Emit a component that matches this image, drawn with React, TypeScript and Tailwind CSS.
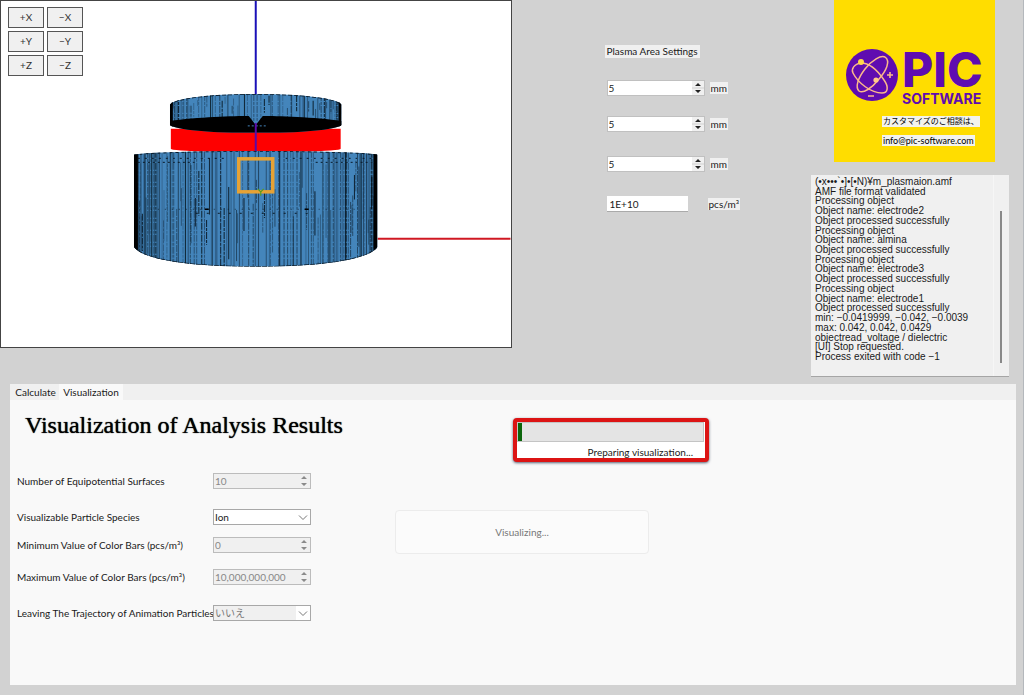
import { useState } from "react";

type Tab = "calculate" | "visualization";

const VIEW_BUTTONS = ["+X", "-X", "+Y", "-Y", "+Z", "-Z"];

const LOG_LINES = [
  "(•x•••`•]•[•N)¥m_plasmaion.amf",
  "AMF file format validated",
  "Processing object",
  "Object name: electrode2",
  "Object processed successfully",
  "Processing object",
  "Object name: almina",
  "Object processed successfully",
  "Processing object",
  "Object name: electrode3",
  "Object processed successfully",
  "Processing object",
  "Object name: electrode1",
  "Object processed successfully",
  "min: −0.0419999, −0.042, −0.0039",
  "max: 0.042, 0.042, 0.0429",
  "objectread_voltage / dielectric",
  "[UI] Stop requested.",
  "Process exited with code −1",
];

// Small deterministic generator so the mesh lines are the same on every render
function makeRandom(seed: number) {
  let s = seed;
  return () => {
    s = (s * 16807) % 2147483647;
    return s / 2147483647;
  };
}

interface MeshProps {
  cx: number;
  rx: number;
  top: number;
  bottom: number;
  count: number;
  seed: number;
}

// Vertical mesh edges of a cylinder, denser towards its sides
function Mesh({ cx, rx, top, bottom, count, seed }: MeshProps) {
  const rand = makeRandom(seed);
  const lines = [];
  for (let i = 0; i < count; i++) {
    const angle = ((i + rand()) / count - 0.5) * Math.PI;
    const x = cx + rx * Math.sin(angle);
    const h = bottom - top;
    const full = rand() > 0.4;
    const y1 = full ? top : top + rand() * h * 0.6;
    const y2 = full ? bottom : y1 + (0.2 + rand() * 0.5) * h;
    const strong = rand() > 0.82;
    lines.push(
      <line
        key={i}
        x1={x}
        x2={x}
        y1={y1}
        y2={y2}
        stroke="#06121c"
        strokeWidth={strong ? 1.1 : 0.8}
        strokeDasharray={rand() > 0.5 ? "7 1 3 1" : "none"}
        opacity={strong ? 0.8 : 0.3 + rand() * 0.4}
      />
    );
  }
  return <g>{lines}</g>;
}

function Model() {
  return (
    <svg viewBox="0 0 510 346" className="block w-full" role="img" aria-label="Electrode model">
      <defs>
        <clipPath id="base">
          <path d="M133 154 Q145 151 255 150 Q365 151 377 154 V246 C368 260 315 266 255 266 C195 266 142 260 133 246 Z" />
        </clipPath>
        <clipPath id="lid">
          <path d="M169 104 C173 97 212 93 255 93 C298 93 337 97 341 104 V124 C335 129 300 132 255 132 C210 132 175 129 169 124 Z" />
        </clipPath>
      </defs>
      <line x1="255" x2="255" y1="0" y2="94" stroke="#1a10b8" strokeWidth="2" />
      <line x1="377" x2="510" y1="238" y2="238" stroke="#d01822" strokeWidth="2" />
      <path d="M170 128 H340 V148 Q340 150 300 151 H210 Q170 150 170 148 Z" fill="#fe0000" />

      <g clipPath="url(#lid)">
        <rect x="169" y="92" width="172" height="42" fill="#4485bb" />
        <Mesh cx={255} rx={85} top={93} bottom={120} count={80} seed={77} />
        <path d="M169 120 C195 116 235 115 248 115 L255 124 L262 115 C275 115 315 116 341 120 V134 H169 Z" fill="#000" />
        <path d="M169 104 C173 97 212 93 255 93 C298 93 337 97 341 104" fill="none" stroke="#0a1a28" strokeWidth="1.6" strokeDasharray="4 2" />
        <rect x="169" y="98" width="3" height="30" fill="#000" />
        <rect x="338" y="98" width="3" height="30" fill="#000" />
        <path d="M247 125 H265" stroke="#4485bb" strokeDasharray="2 2" />
      </g>
      <line x1="255" x2="255" y1="122" y2="152" stroke="#5a0aa8" strokeWidth="2" />

      <g clipPath="url(#base)">
        <rect x="133" y="149" width="244" height="118" fill="#4485bb" />
        <Mesh cx={255} rx={121} top={150} bottom={267} count={160} seed={4211} />
        <path d="M133 154 Q145 151 255 150 Q365 151 377 154" fill="none" stroke="#0a1a28" strokeWidth="1.6" strokeDasharray="3 3" />
        <path d="M137 157.5 H225 M285 157.5 H373" stroke="#0a1a28" strokeDasharray="2 5" />
        <path d="M137 161.5 H195 M315 161.5 H373" stroke="#0a1a28" strokeDasharray="2 3" />
        <path d="M150 208.5 H360" stroke="#0a1a28" strokeDasharray="1 6" opacity="0.7" />
        <path d="M195 212.5 H315" stroke="#0a1a28" strokeDasharray="2 9" />
        <path d="M204 208.5 h4 M304 208.5 h4" stroke="#000" strokeWidth="1.6" />
        <rect x="133" y="152" width="4" height="100" fill="#000" />
        <rect x="373" y="152" width="4" height="100" fill="#000" />
        <path d="M133 246 C142 260 195 266 255 266 C315 266 368 260 377 246" fill="none" stroke="#06121c" strokeWidth="1.3" strokeDasharray="5 1" />
      </g>

      <rect x="238" y="158" width="34" height="33" fill="none" stroke="#e6a235" strokeWidth="3.5" />
      <path d="M257 188 l3 3 l3 -3 M260 191 v4" fill="none" stroke="#5c9a1c" strokeWidth="1.2" />
    </svg>
  );
}

function LogoMark() {
  return (
    <svg viewBox="0 0 52 52" className="size-[52px] shrink-0" aria-hidden="true">
      <circle cx="26" cy="26" r="26" fill="#5f0cb0" />
      <g fill="none" stroke="#fbb98a" strokeWidth="1.5">
        <path d="M15 14 C8 15 5 20 7 24 C12 34 25 44 36 44 C42 44 43 38 38 31 C32 22 24 14 15 14" />
        <path d="M39 8 C45 12 40 22 33 30 C26 39 17 45 13 42 C9 38 12 29 19 20 C26 11 35 6 39 8" />
      </g>
      <circle cx="15" cy="13" r="3" fill="#ffd84a" />
      <circle cx="30" cy="31" r="2.6" fill="#ffc98a" />
      <path d="M41 26 h6 M44 23 v6 M22 47 h6" stroke="#fbb98a" strokeWidth="1.6" />
    </svg>
  );
}

function SpinArrows({ muted }: { muted?: boolean }) {
  return (
    <svg viewBox="0 0 12 14" className="h-[14px] w-3 shrink-0 bg-[#f0f0f0]" aria-hidden="true">
      <path d="M6 2 L9 5 H3 Z M6 12 L3 9 H9 Z" fill={muted ? "#8a8a8a" : "#222"} />
      {!muted && <path d="M0 7 H12" stroke="#d0d0d0" />}
    </svg>
  );
}

interface SpinProps {
  id: string;
  value: string;
  disabled?: boolean;
  label?: string;
}

function SpinBox({ id, value, disabled, label }: SpinProps) {
  return (
    <div
      className={`flex h-4 w-[98px] items-center border ${
        disabled ? "border-[#bcbcbc] bg-[#f0f0f0]" : "border-[#c0c0c0] bg-white"
      }`}
    >
      <input
        id={id}
        aria-label={label}
        defaultValue={value}
        disabled={disabled}
        className="h-[14px] w-0 flex-1 bg-transparent px-px leading-[14px] outline-none disabled:text-[#888]"
      />
      <SpinArrows muted={disabled} />
    </div>
  );
}

interface SelectProps {
  id: string;
  options: string[];
  disabled?: boolean;
}

function SelectBox({ id, options, disabled }: SelectProps) {
  return (
    <div className="relative h-4 w-[98px] border border-[#a8a8a8] bg-white">
      <select
        id={id}
        disabled={disabled}
        className="block h-[14px] w-full appearance-none px-px leading-[14px] outline-none disabled:bg-[#f0f0f0] disabled:text-[#777] disabled:opacity-100"
      >
        {options.map((o) => (
          <option key={o}>{o}</option>
        ))}
      </select>
      <svg viewBox="0 0 14 14" className="pointer-events-none absolute top-0 right-0 size-[14px] bg-white" aria-hidden="true">
        <path d="M3 5.5 L7 9.5 L11 5.5" fill="none" stroke="#777" />
      </svg>
    </div>
  );
}

function PlasmaSettings() {
  return (
    <section className="flex flex-1 flex-col items-start pt-[45px] pl-[95px]">
      <h2 className="-ml-0.5 bg-[#f0f0f0] px-0.5 leading-[13px]">Plasma Area Settings</h2>
      <div className="mt-[22px] flex items-center gap-[5px]">
        <SpinBox id="area-x" value="5" label="Area X" />
        <span className="bg-[#f0f0f0] px-px leading-3">mm</span>
      </div>
      <div className="mt-5 flex items-center gap-[5px]">
        <SpinBox id="area-y" value="5" label="Area Y" />
        <span className="bg-[#f0f0f0] px-px leading-3">mm</span>
      </div>
      <div className="mt-6 flex items-center gap-[5px]">
        <SpinBox id="area-z" value="5" label="Area Z" />
        <span className="bg-[#f0f0f0] px-px leading-3">mm</span>
      </div>
      <div className="mt-6 flex items-center gap-5">
        <input
          aria-label="Plasma density"
          defaultValue="1E+10"
          className="h-4 w-[81px] border-b border-[#aaa] bg-white px-[3px] outline-none"
        />
        <span className="bg-[#f0f0f0] px-px leading-3">pcs/m³</span>
      </div>
    </section>
  );
}

function Brand() {
  return (
    <div className="mr-[14px] ml-[23px] flex h-[162px] flex-col bg-[#ffdd00] pt-[49px] pl-3">
      <div className="flex items-start gap-1 font-['Inter',sans-serif] text-[#5f0cb0]">
        <LogoMark />
        <div>
          <p className="text-[48px] leading-[41px] font-extrabold">PIC</p>
          <p className="text-[14px] leading-[18px] font-bold">SOFTWARE</p>
        </div>
      </div>
      <div className="mt-2 ml-9 flex flex-col items-start gap-2">
        <p className="bg-[#f3f3ee] px-px text-[8px] leading-[11px] text-black">カスタマイズのご相談は、</p>
        <a href="mailto:info@pic-software.com" className="bg-[#f3f3ee] px-px text-[9px] leading-[11px] text-black">
          info@pic-software.com
        </a>
      </div>
    </div>
  );
}

function LogPanel() {
  return (
    <div className="mt-[13px] flex h-[202px] justify-between border-b border-[#a5a5a5] bg-[#f0f0f0]">
      <div role="log" className="flex h-[186px] flex-col justify-between pt-0.5 pl-1 font-['Liberation_Sans',sans-serif] leading-[9px] whitespace-nowrap">
        {LOG_LINES.map((line, i) => (
          <p key={i}>{line}</p>
        ))}
      </div>
      <div className="w-4 shrink-0 border-l border-[#f6f6f6] pt-9 pl-[6px]">
        <div className="h-[152px] w-0.5 bg-[#888]" />
      </div>
    </div>
  );
}

function VisualizationTab() {
  return (
    <div className="grid grid-cols-[378px_1fr] pl-[7px]">
      <div>
        <h1 className="mt-[10px] ml-2 font-['Liberation_Serif',serif] text-[24px] leading-[30px] whitespace-nowrap text-black [text-shadow:0_0_1px_#000]">
          Visualization of Analysis Results
        </h1>
        <form className="mt-[33px]">
          <div className="flex h-4 items-center">
            <label htmlFor="surfaces" className="w-[196px] whitespace-nowrap">Number of Equipotential Surfaces</label>
            <SpinBox id="surfaces" value="10" disabled />
          </div>
          <div className="mt-5 flex h-4 items-center">
            <label htmlFor="species" className="w-[196px] whitespace-nowrap">Visualizable Particle Species</label>
            <SelectBox id="species" options={["Ion", "Electron"]} />
          </div>
          <div className="mt-3 flex h-4 items-center">
            <label htmlFor="min" className="w-[196px] whitespace-nowrap">Minimum Value of Color Bars (pcs/m³)</label>
            <SpinBox id="min" value="0" disabled />
          </div>
          <div className="mt-4 flex h-4 items-center">
            <label htmlFor="max" className="w-[196px] whitespace-nowrap">Maximum Value of Color Bars (pcs/m³)</label>
            <SpinBox id="max" value="10,000,000,000" disabled />
          </div>
          <div className="mt-5 flex h-4 items-center">
            <label htmlFor="trail" className="w-[196px] whitespace-nowrap">Leaving The Trajectory of Animation Particles</label>
            <SelectBox id="trail" options={["いいえ", "はい"]} disabled />
          </div>
        </form>
      </div>

      <div className="pt-[18px]">
        <div className="ml-[118px] h-11 w-[196px] rounded border-4 border-[#dc1414] bg-white shadow-sm shadow-gray-500">
          <div
            role="progressbar"
            aria-valuenow={2}
            aria-label="Visualization progress"
            className="mr-px h-5 border border-[#c4c4c4] bg-[#e4e4e4]"
          >
            <div className="h-full bg-[#0b650b]" style={{ width: "2%" }} />
          </div>
          <p className="mt-1 mr-3 text-right leading-3">Preparing visualization...</p>
        </div>
        <button
          disabled
          className="mt-12 block h-11 w-[254px] rounded-sm border border-[#ececec] bg-[#fbfbfb] text-[#777]"
        >
          Visualizing...
        </button>
      </div>
    </div>
  );
}

function App() {
  const [activeTab, setActiveTab] = useState<Tab>("visualization");

  return (
    <div className="flex min-h-screen flex-col border-r border-[#b4b8bc] bg-[#d2d2d2] font-['Lato','Noto_Sans_CJK_JP',sans-serif] text-[10px] text-[#1a1a1a]">
      <div className="flex items-start">
        {/* 3D view */}
        <div className="relative w-1/2 border border-[#444] bg-white">
          <Model />
          <div className="absolute top-[6px] left-[7px] grid grid-cols-2 gap-x-[3px] gap-y-[3px]">
            {VIEW_BUTTONS.map((name) => (
              <button key={name} className="h-[21px] w-9 border border-[#555] bg-[#f0f0f0] text-[#333]">
                {name.replace("-", "−")}
              </button>
            ))}
          </div>
        </div>

        <PlasmaSettings />

        <aside className="mr-[14px] w-[198px] shrink-0">
          <Brand />
          <LogPanel />
        </aside>
      </div>

      {/* Tabs */}
      <main className="mt-[7px] mr-[7px] mb-[10px] ml-[10px] flex-1 bg-[#f9f9f9]">
        <nav className="flex h-4 bg-[#f0f0f0] pl-0.5" aria-label="Tabs">
          <button
            onClick={() => setActiveTab("calculate")}
            className={`w-[47px] leading-4 ${activeTab === "calculate" ? "bg-[#f9f9f9]" : "bg-[#f0f0f0]"}`}
          >
            Calculate
          </button>
          <button
            onClick={() => setActiveTab("visualization")}
            className={`w-16 leading-4 ${activeTab === "visualization" ? "bg-[#f9f9f9]" : "bg-[#f0f0f0]"}`}
          >
            Visualization
          </button>
        </nav>
        {activeTab === "visualization" && <VisualizationTab />}
      </main>
    </div>
  );
}

export default App;
